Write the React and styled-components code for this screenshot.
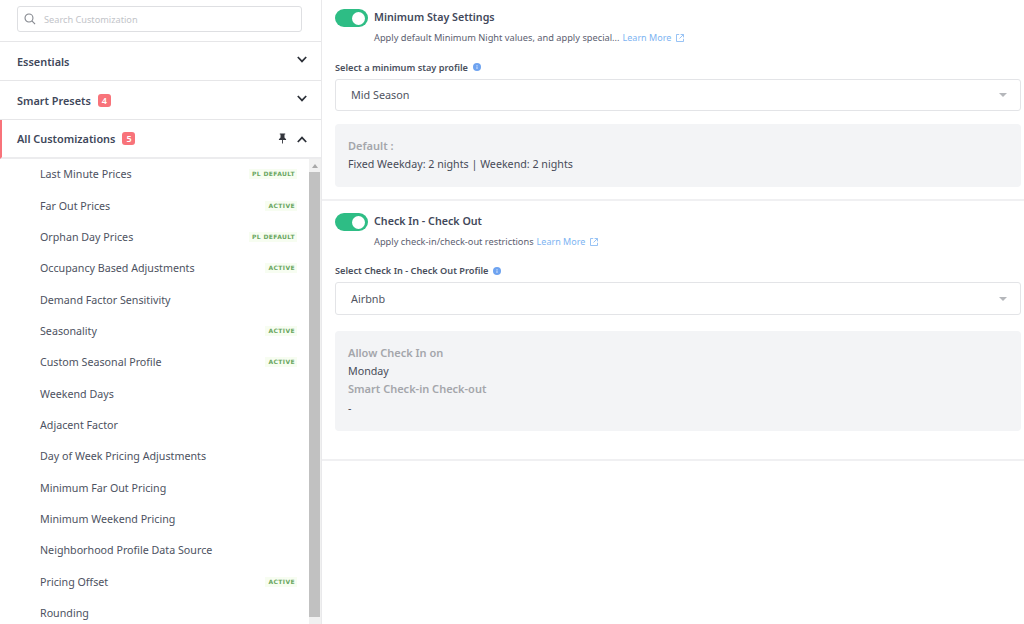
import React from "react";
import styled, { createGlobalStyle } from "styled-components";

const Global = createGlobalStyle`
  html, body { margin: 0; padding: 0; background: #fff; }
  body { font-family: "Noto Sans", "Liberation Sans", sans-serif; color: #3f4254; }
  * { box-sizing: border-box; }
`;
const Page = styled.div`display: flex; width: 1024px; height: 624px; overflow: hidden; background: #fff;`;
const Sidebar = styled.aside`width: 322px; flex: none; height: 624px; display: flex; flex-direction: column; border-right: 1px solid #e9e9eb;`;
const SearchWrap = styled.div`height: 42px; flex: none; padding: 6px 19px 0 17px; border-bottom: 1px solid #e6e6e8;`;
const SearchBox = styled.div`height: 26px; display: flex; align-items: center; gap: 8px; padding-left: 6px; border: 1px solid #dedfe2; border-radius: 3px;`;
const Placeholder = styled.span`font-size: 9.2px; color: #c2c4c9;`;
const Section = styled.div`height: 39px; flex: none; display: flex; align-items: center; padding: 0 14px ${p => p.$active ? 1 : 0}px ${p => p.$active ? 15 : 17}px; border-bottom: ${p => p.$active ? "2px solid #ececee" : "1px solid #e6e6e8"}; border-left: ${p => p.$active ? "2px solid #f8737a" : "none"};`;
const SectionTitle = styled.span`font-size: 10.9px; font-weight: 600; color: #40475a;`;
const Count = styled.span`margin-left: 7px; min-width: 13px; height: 13px; padding: 0 3px; border-radius: 3px; background: #f8737a; color: #fff; font-size: 9px; font-weight: 600; line-height: 13px; text-align: center;`;
const Actions = styled.span`margin-left: auto; display: flex; align-items: center; gap: 10px;`;
const ChevronSvg = styled.svg`display: block; margin-top: ${p => p.$up ? 3 : -3}px;`;
const ListArea = styled.div`flex: 1; min-height: 0; display: flex;`;
const List = styled.div`flex: 1; min-width: 0; overflow: hidden;`;
const Item = styled.div`height: 31.36px; display: flex; align-items: center; justify-content: space-between; padding: 0 12px 1px 40px;`;
const ItemLabel = styled.span`font-size: 10.7px; color: #4d5261; white-space: nowrap;`;
const Tag = styled.span`font-family: "DejaVu Sans", sans-serif; height: 10px; padding: 0 2px 0 3px; background: #f7fdf1; color: #69a65f; font-size: 6px; font-weight: 700; letter-spacing: 0.4px; line-height: 10px; white-space: nowrap;`;
const Scrollbar = styled.div`width: 12px; flex: none; background: #f1f1f1; display: flex; flex-direction: column; align-items: flex-start;`;
const Arrow = styled.div`height: 13px; width: 11px; flex: none; display: flex; align-items: center; justify-content: center; &::before { content: ""; border: 3px solid transparent; border-top: 0; border-bottom: 4px solid #a8a8a8; }`;
const Thumb = styled.div`width: 11px; height: 445px; background: #c1c1c1;`;
const Main = styled.main`flex: 1; min-width: 0; display: flex; flex-direction: column;`;
const Block = styled.section`flex: none; padding: ${p => p.$top}px 3px 0 13px; height: ${p => p.$height}px; border-bottom: 2px solid #f0f0f2;`;
const Head = styled.div`display: flex; gap: 6px; align-items: flex-start;`;
const Toggle = styled.div`width: 33px; height: 18px; flex: none; display: flex; justify-content: flex-end; align-items: center; padding-right: 3px; border-radius: 9px; background: #2ebd85; &::after { content: ""; width: 13px; height: 13px; border-radius: 50%; background: #fff; }`;
const HeadText = styled.div`display: flex; flex-direction: column; gap: 6px;`;
const Title = styled.div`font-size: 10.7px; font-weight: 600; color: #42485a; line-height: 16px;`;
const Desc = styled.div`display: flex; align-items: center; gap: 3px; font-size: 9.25px; color: #5b6070; line-height: 13px; white-space: nowrap;`;
const Learn = styled.span`color: #7db4f2; font-size: 9px; display: inline-flex; align-items: center; gap: 5px;`;
const Label = styled.div`display: flex; align-items: center; gap: 5px; margin-top: ${p => p.$mt}px; font-size: 9.2px; font-weight: 600; color: #4a4f5d; line-height: 13px;`;
const Select = styled.div`margin-top: 5px; height: 32.5px; display: flex; align-items: center; justify-content: space-between; padding: 0 13px 0 15px; border: 1px solid #e3e4e7; border-radius: 3px; font-size: 10.8px; color: #50545f;`;
const Caret = styled.span`width: 0; height: 0; border: 4px solid transparent; border-bottom: 0; border-top: 4px solid #b5b7bb; margin-top: 1px;`;
const Panel = styled.div`margin-top: ${p => p.$mt}px; min-height: ${p => p.$h}px; padding: 13px 13px 0; border-radius: 4px; background: #f3f4f6;`;
const PanelLabel = styled.div`font-size: 11px; font-weight: 600; color: #a4a6ab; line-height: 18.4px;`;
const PanelValue = styled.div`font-size: 10.7px; color: #474b58; line-height: 18.4px;`;

const Chevron = ({ up }) => (
  <ChevronSvg $up={up} width="10" height="7" viewBox="0 0 10 7" fill="none" stroke="#2c3038" strokeWidth="1.7">
    <path d={up ? "M.8 6L5 1.6 9.2 6" : "M.8 1L5 5.4 9.2 1"} />
  </ChevronSvg>
);
const Pin = () => (
  <svg width="9" height="11" viewBox="0 0 10 11" fill="#33363d">
    <path d="M2 0h6v1H7.2v3.4L9 6.2v1H5.5V11h-1V7.2H1v-1l1.8-1.8V1H2z" />
  </svg>
);
const Ext = () => (
  <svg width="8" height="8" viewBox="0 0 8 8" fill="none" stroke="#7db4f2" strokeWidth="0.8">
    <path d="M3.2.5H.5v7h7V4.8M4.6.5h2.9v2.9M7.3.7L3.5 4.5" />
  </svg>
);
const Search = () => (
  <svg width="12" height="12" viewBox="0 0 13 13" fill="none" stroke="#85888f" strokeWidth="1.2">
    <circle cx="5.4" cy="5.4" r="4.3" /><path d="M8.6 8.6L12 12" />
  </svg>
);
const Info = () => (
  <svg width="8" height="8" viewBox="0 0 8 8">
    <circle cx="4" cy="4" r="4" fill="#6ea3f0" />
    <path d="M4 3.4v2.6M4 2v.9" stroke="#dfeafc" strokeWidth="0.9" />
  </svg>
);

const items = [
  ["Last Minute Prices", "PL DEFAULT"], ["Far Out Prices", "ACTIVE"], ["Orphan Day Prices", "PL DEFAULT"],
  ["Occupancy Based Adjustments", "ACTIVE"], ["Demand Factor Sensitivity"], ["Seasonality", "ACTIVE"],
  ["Custom Seasonal Profile", "ACTIVE"], ["Weekend Days"], ["Adjacent Factor"], ["Day of Week Pricing Adjustments"],
  ["Minimum Far Out Pricing"], ["Minimum Weekend Pricing"], ["Neighborhood Profile Data Source"],
  ["Pricing Offset", "ACTIVE"], ["Rounding"],
];

export default function App() {
  return (
    <Page>
      <Global />
      <Sidebar>
        <SearchWrap><SearchBox><Search /><Placeholder>Search Customization</Placeholder></SearchBox></SearchWrap>
        <Section><SectionTitle>Essentials</SectionTitle><Actions><Chevron /></Actions></Section>
        <Section><SectionTitle>Smart Presets</SectionTitle><Count>4</Count><Actions><Chevron /></Actions></Section>
        <Section $active><SectionTitle>All Customizations</SectionTitle><Count>5</Count><Actions><Pin /><Chevron up /></Actions></Section>
        <ListArea>
          <List>
            {items.map(([label, tag]) => (
              <Item key={label}><ItemLabel>{label}</ItemLabel>{tag && <Tag>{tag}</Tag>}</Item>
            ))}
          </List>
          <Scrollbar><Arrow /><Thumb /></Scrollbar>
        </ListArea>
      </Sidebar>
      <Main>
        <Block $top={9} $height={201}>
          <Head>
            <Toggle />
            <HeadText>
              <Title>Minimum Stay Settings</Title>
              <Desc>Apply default Minimum Night values, and apply special... <Learn>Learn More <Ext /></Learn></Desc>
            </HeadText>
          </Head>
          <Label $mt={16.5}>Select a minimum stay profile <Info /></Label>
          <Select>Mid Season<Caret /></Select>
          <Panel $mt={13} $h={63}>
            <PanelLabel>Default :</PanelLabel>
            <PanelValue>Fixed Weekday: 2 nights | Weekend: 2 nights</PanelValue>
          </Panel>
        </Block>
        <Block $top={12} $height={260}>
          <Head>
            <Toggle />
            <HeadText>
              <Title>Check In - Check Out</Title>
              <Desc>Apply check-in/check-out restrictions <Learn>Learn More <Ext /></Learn></Desc>
            </HeadText>
          </Head>
          <Label $mt={16}>Select Check In - Check Out Profile <Info /></Label>
          <Select>Airbnb<Caret /></Select>
          <Panel $mt={16} $h={100}>
            <PanelLabel>Allow Check In on</PanelLabel>
            <PanelValue>Monday</PanelValue>
            <PanelLabel>Smart Check-in Check-out</PanelLabel>
            <PanelValue>-</PanelValue>
          </Panel>
        </Block>
      </Main>
    </Page>
  );
}
